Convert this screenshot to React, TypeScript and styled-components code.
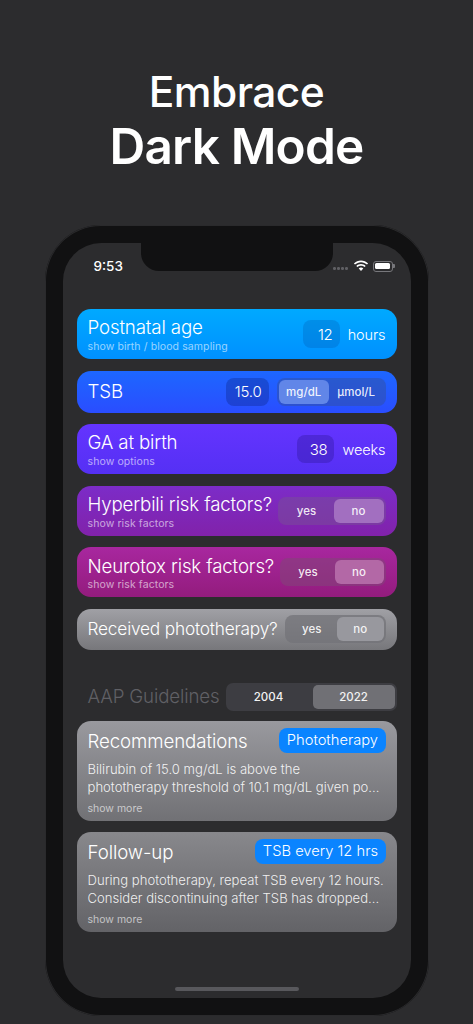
import React from "react";
import styled, { createGlobalStyle } from "styled-components";

const GlobalStyle = createGlobalStyle`
  html, body {
    margin: 0;
    padding: 0;
    background: #2c2c2e;
    font-family: "Inter", "Liberation Sans", sans-serif;
    color: white;
  }
`;

const App = () => {
  return (
    <Page>
      <GlobalStyle />
      <Heading>
        <HeadingLight>Embrace</HeadingLight>
        <HeadingBold>Dark Mode</HeadingBold>
      </Heading>
      <Phone>
        <Screen>
          <StatusBar>
            <Clock>9:53</Clock>
            <StatusIcons>
              <SignalDots>
                <Dot />
                <Dot />
                <Dot />
                <Dot />
              </SignalDots>
              <svg width="16" height="12" viewBox="0 0 16 12">
                <path
                  d="M8 2.2c2.3 0 4.4.9 6 2.4l1.1-1.2C13.200 1.600 10.700.5 8 .5S2.800 1.600.9 3.400L2 4.600c1.600-1.500 3.700-2.400 6-2.400z"
                  fill="#fff"
                />
                <path
                  d="M8 5.700c1.400 0 2.600.5 3.600 1.400l1.100-1.200C11.400 4.700 9.800 4 8 4s-3.400.7-4.700 1.900l1.100 1.200c1-.9 2.200-1.400 3.600-1.400z"
                  fill="#fff"
                />
                <path
                  d="M8 7.500c-.9 0-1.700.3-2.300.9L8 11l2.300-2.600c-.6-.6-1.400-.9-2.300-.9z"
                  fill="#fff"
                />
              </svg>
              <Battery>
                <BatteryFill />
              </Battery>
            </StatusIcons>
          </StatusBar>
          <Notch />

          <Rows>
            <Row $height={50} $from="#00a9ff" $to="#0090ff">
              <Labels>
                <Title>Postnatal age</Title>
                <Sub>show birth / blood sampling</Sub>
              </Labels>
              <Controls>
                <Field $tint="rgba(0,60,140,0.2)">12</Field>
                <Unit>hours</Unit>
              </Controls>
            </Row>
            <Row $height={42} $from="#1d67ff" $to="#2a4dff">
              <Title>TSB</Title>
              <Controls>
                <Field $tint="rgba(10,30,120,0.32)" $wide>
                  15.0
                </Field>
                <Segments $width={109} $tint="rgba(50,80,160,0.5)">
                  <Segment $on $onColor="#6186e8">
                    mg/dL
                  </Segment>
                  <Segment>µmol/L</Segment>
                </Segments>
              </Controls>
            </Row>
            <Row $height={50} $from="#6434ff" $to="#5530f4">
              <Labels>
                <Title>GA at birth</Title>
                <Sub>show options</Sub>
              </Labels>
              <Controls>
                <Field $tint="rgba(40,20,140,0.32)">38</Field>
                <Unit>weeks</Unit>
              </Controls>
            </Row>
            <Row $height={50} $from="#7c2cc8" $to="#8122aa">
              <Labels>
                <Title>Hyperbili risk factors?</Title>
                <Sub>show risk factors</Sub>
              </Labels>
              <Segments $width={108} $tint="rgba(120,80,150,0.5)">
                <Segment>yes</Segment>
                <Segment $on $onColor="#a26fc0">
                  no
                </Segment>
              </Segments>
            </Row>
            <Row $height={50} $from="#a8279f" $to="#931c7d">
              <Labels>
                <Title>Neurotox risk factors?</Title>
                <Sub>show risk factors</Sub>
              </Labels>
              <Segments $width={106} $tint="rgba(130,70,120,0.55)">
                <Segment>yes</Segment>
                <Segment $on $onColor="#b368a6">
                  no
                </Segment>
              </Segments>
            </Row>
            <Row $height={41} $from="#a0a0a5" $to="#77777b">
              <Title $small>Received phototherapy?</Title>
              <Segments $width={101} $tint="rgba(115,115,120,0.75)">
                <Segment>yes</Segment>
                <Segment $on $onColor="#98989e">
                  no
                </Segment>
              </Segments>
            </Row>
          </Rows>

          <GuidelineHeader>
            <GuidelineLabel>AAP Guidelines</GuidelineLabel>
            <YearPicker>
              <Year>2004</Year>
              <Year $on>2022</Year>
            </YearPicker>
          </GuidelineHeader>

          <Cards>
            <Card $from="#99999e" $to="#717175">
              <CardTop>
                <CardTitle>Recommendations</CardTitle>
                <Pill>Phototherapy</Pill>
              </CardTop>
              <CardBody>
                Bilirubin of 15.0 mg/dL is above the
                <br />
                phototherapy threshold of 10.1 mg/dL given po...
              </CardBody>
              <More>show more</More>
            </Card>
            <Card $from="#88888c" $to="#636367">
              <CardTop>
                <CardTitle>Follow-up</CardTitle>
                <Pill>TSB every 12 hrs</Pill>
              </CardTop>
              <CardBody>
                During phototherapy, repeat TSB every 12 hours.
                <br />
                Consider discontinuing after TSB has dropped...
              </CardBody>
              <More>show more</More>
            </Card>
          </Cards>

          <HomeBar />
        </Screen>
      </Phone>
    </Page>
  );
};

export default App;

const Page = styled.div`
  width: 473px;
  height: 1024px;
  overflow: hidden;
  display: flex;
  flex-direction: column;
  align-items: center;
  background: #2c2c2e;
`;

const Heading = styled.div`
  height: 225px;
  padding-top: 67px;
  box-sizing: border-box;
  display: flex;
  flex-direction: column;
  align-items: center;
`;

const HeadingLight = styled.div`
  font-size: 42.5px;
  line-height: 50px;
  font-weight: 450;
  letter-spacing: -0.6px;
`;

const HeadingBold = styled.div`
  font-size: 49.5px;
  line-height: 58px;
  font-weight: 600;
  letter-spacing: -0.8px;
`;

const Phone = styled.div`
  width: 384px;
  height: 791px;
  box-sizing: border-box;
  padding: 18px;
  background: #111112;
  border-radius: 56px;
  box-shadow: inset 0 0 0 1px #2a2a2c;
`;

const Screen = styled.div`
  position: relative;
  height: 755px;
  box-sizing: border-box;
  padding: 0 14px;
  background: #2c2c2e;
  border-radius: 38px;
  overflow: hidden;
  display: flex;
  flex-direction: column;
`;

const Notch = styled.div`
  position: absolute;
  top: 0;
  left: 78px;
  width: 192px;
  height: 28px;
  background: #111112;
  border-radius: 0 0 18px 18px;
`;

const StatusBar = styled.div`
  height: 66px;
  box-sizing: border-box;
  padding: 14px 4px 0 17px;
  display: flex;
  justify-content: space-between;
  align-items: flex-start;
`;

const Clock = styled.div`
  font-size: 13.5px;
  line-height: 18px;
  font-weight: 500;
`;

const StatusIcons = styled.div`
  display: flex;
  align-items: center;
  gap: 4px;
  height: 18px;
`;

const SignalDots = styled.div`
  display: flex;
  gap: 1.5px;
  margin-top: 5px;
  margin-right: 1px;
`;

const Dot = styled.span`
  width: 2.5px;
  height: 2.5px;
  border-radius: 50%;
  background: #5f5f63;
`;

const Battery = styled.div`
  position: relative;
  width: 20px;
  height: 11px;
  box-sizing: border-box;
  padding: 1.5px;
  border: 1px solid #77777b;
  border-radius: 3px;

  &::after {
    content: "";
    position: absolute;
    top: 2px;
    right: -3px;
    width: 1.5px;
    height: 4px;
    border-radius: 0 1px 1px 0;
    background: #77777b;
  }
`;

const BatteryFill = styled.div`
  height: 100%;
  background: #fff;
  border-radius: 1.5px;
`;

const Rows = styled.div`
  display: flex;
  flex-direction: column;
  gap: 11.6px;
`;

const Row = styled.div<{ $height: number; $from: string; $to: string }>`
  height: ${(p) => p.$height}px;
  box-sizing: border-box;
  padding: 0 11px;
  display: flex;
  align-items: center;
  justify-content: space-between;
  border-radius: 14px;
  background: linear-gradient(${(p) => p.$from}, ${(p) => p.$to});
`;

const Labels = styled.div`
  display: flex;
  flex-direction: column;
  padding-top: 3px;
`;

const Title = styled.div<{ $small?: boolean }>`
  font-size: ${(p) => (p.$small ? 17.3 : 18.7)}px;
  line-height: 22px;
  font-weight: 300;
  letter-spacing: ${(p) => (p.$small ? -0.2 : -0.15)}px;
  white-space: nowrap;
  color: #fff;
`;

const Sub = styled.div`
  margin-top: 0.5px;
  font-size: 10.5px;
  line-height: 14px;
  letter-spacing: 0.1px;
  color: rgba(255, 255, 255, 0.6);
`;

const Controls = styled.div`
  display: flex;
  align-items: center;
  gap: 8px;
`;

const Field = styled.div<{ $tint: string; $wide?: boolean }>`
  width: ${(p) => (p.$wide ? 43 : 37)}px;
  height: 28px;
  box-sizing: border-box;
  padding-right: 7px;
  display: flex;
  align-items: center;
  justify-content: flex-end;
  font-size: 15px;
  font-weight: 300;
  letter-spacing: -0.2px;
  border-radius: 8px;
  background: ${(p) => p.$tint};
`;

const Unit = styled.div`
  font-size: 14.5px;
  font-weight: 300;
  letter-spacing: -0.1px;
`;

const Segments = styled.div<{ $width: number; $tint: string }>`
  width: ${(p) => p.$width}px;
  height: 28px;
  box-sizing: border-box;
  padding: 2px;
  display: flex;
  flex-shrink: 0;
  border-radius: 8px;
  background: ${(p) => p.$tint};
`;

const Segment = styled.div<{ $on?: boolean; $onColor?: string }>`
  flex: ${(p) => (p.$on ? "0 0 48%" : "1")};
  display: flex;
  align-items: center;
  justify-content: center;
  font-size: 11.5px;
  font-weight: ${(p) => (p.$on ? 550 : 450)};
  border-radius: 6px;
  color: rgba(255, 255, 255, 0.9);
  background: ${(p) => (p.$on ? p.$onColor : "transparent")};
`;

const GuidelineHeader = styled.div`
  height: 28px;
  margin: 33px 0 10px;
  padding-left: 11px;
  display: flex;
  align-items: center;
  justify-content: space-between;
`;

const GuidelineLabel = styled.div`
  font-size: 18.7px;
  font-weight: 300;
  letter-spacing: -0.15px;
  color: #606065;
`;

const YearPicker = styled.div`
  width: 171px;
  height: 28px;
  box-sizing: border-box;
  padding: 2px;
  display: flex;
  border-radius: 7px;
  background: #3d3d42;
`;

const Year = styled.div<{ $on?: boolean }>`
  flex: ${(p) => (p.$on ? "0 0 82px" : "1")};
  padding-right: ${(p) => (p.$on ? 0 : 3)}px;
  display: flex;
  align-items: center;
  justify-content: center;
  font-size: 11.5px;
  font-weight: 450;
  border-radius: 5px;
  color: #f2f2f2;
  background: ${(p) => (p.$on ? "#707075" : "transparent")};
`;

const Cards = styled.div`
  display: flex;
  flex-direction: column;
  gap: 11px;
`;

const Card = styled.div<{ $from: string; $to: string }>`
  height: 100px;
  box-sizing: border-box;
  padding: 7px 11px 0;
  border-radius: 14px;
  background: linear-gradient(${(p) => p.$from}, ${(p) => p.$to});
`;

const CardTop = styled.div`
  display: flex;
  justify-content: space-between;
  align-items: center;
  height: 25px;
`;

const CardTitle = styled.div`
  padding-top: 2px;
  font-size: 18.7px;
  font-weight: 300;
  letter-spacing: -0.1px;
`;

const Pill = styled.div`
  height: 25px;
  box-sizing: border-box;
  padding: 0 7.5px;
  display: flex;
  align-items: center;
  font-size: 14.7px;
  font-weight: 300;
  letter-spacing: 0;
  border-radius: 8px;
  background: #0a84ff;
`;

const CardBody = styled.div`
  margin-top: 7px;
  font-size: 13.1px;
  line-height: 18px;
  font-weight: 300;
  letter-spacing: 0;
  white-space: nowrap;
  color: rgba(255, 255, 255, 0.9);
`;

const More = styled.div`
  margin-top: 6px;
  font-size: 10.5px;
  line-height: 14px;
  color: rgba(255, 255, 255, 0.62);
`;

const HomeBar = styled.div`
  position: absolute;
  left: 112px;
  bottom: 7px;
  width: 124px;
  height: 4px;
  border-radius: 2px;
  background: #58585c;
`;
